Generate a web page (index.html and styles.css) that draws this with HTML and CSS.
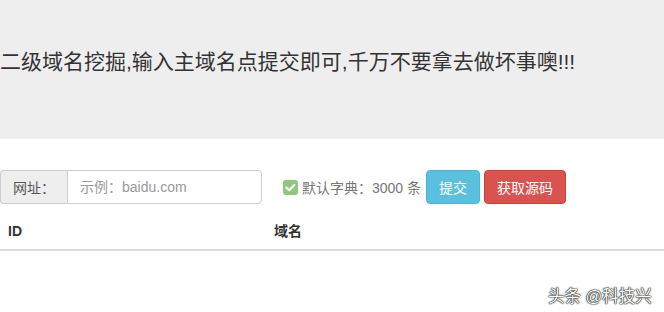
FILE: index.html
```html
<!DOCTYPE html>
<html>
<head>
<meta charset="utf-8">
<link rel="stylesheet" href="styles.css">
</head>
<body>
<div class="banner">
  <h1 class="title">二级域名挖掘,输入主域名点提交即可,千万不要拿去做坏事噢!!!</h1>
</div>
<div class="form">
  <div class="group">
    <span class="addon">网址：</span>
    <input class="field" type="text" placeholder="示例：baidu.com">
  </div>
  <label class="dict">
    <span class="check"><svg width="15" height="15" viewBox="0 0 15 15"><rect x="0" y="0" width="15" height="15" rx="3" fill="#8cc97b"/><path d="M3.5 7.6 L6.3 10.2 L11.5 4.8" fill="none" stroke="#fff" stroke-width="2.2" stroke-linecap="round" stroke-linejoin="round"/></svg></span>
    <span class="dict-text">默认字典：3000 条</span>
  </label>
  <button class="btn btn-info">提交</button>
  <button class="btn btn-danger">获取源码</button>
</div>
<table class="table">
  <thead>
    <tr><th class="col-id">ID</th><th>域名</th></tr>
  </thead>
</table>
<div class="mark">头条 @科技兴</div>
</body>
</html>
```
FILE: styles.css
```css
html, body {
  margin: 0;
  padding: 0;
}
body {
  width: 664px;
  height: 312px;
  overflow: hidden;
  font-family: "Liberation Sans", "Noto Sans CJK SC", sans-serif;
  font-size: 14px;
  color: #333;
  background: #fff;
  position: relative;
}
.banner {
  background: #eeeeee;
  height: 139px;
  padding-top: 47px;
  box-sizing: border-box;
}
.title {
  margin: 0;
  font-family: "Liberation Sans", "Noto Sans CJK SC", sans-serif;
  font-weight: normal;
  font-size: 21px;
  line-height: 30px;
  color: #333;
  white-space: nowrap;
}
.form {
  display: flex;
  align-items: center;
  margin-top: 31px;
  height: 34px;
}
.group {
  display: flex;
  width: 262px;
  height: 34px;
  box-sizing: border-box;
}
.addon {
  width: 67px;
  box-sizing: border-box;
  background: #eee;
  border: 1px solid #ccc;
  border-right: none;
  border-radius: 4px 0 0 4px;
  color: #555;
  display: flex;
  align-items: center;
  justify-content: center;
  font-size: 14px;
}
.field {
  flex: 1;
  min-width: 0;
  box-sizing: border-box;
  border: 1px solid #ccc;
  border-radius: 0 4px 4px 0;
  padding: 6px 12px;
  font-family: "Liberation Sans", "Noto Sans CJK SC", sans-serif;
  font-size: 14px;
  color: #555;
  outline: none;
  margin: 0;
}
.field::placeholder {
  color: #999;
}
.dict {
  display: flex;
  align-items: center;
  margin-left: 21px;
  color: #777;
  font-size: 14px;
}
.check {
  display: flex;
  width: 15px;
  height: 15px;
  margin-right: 4px;
  margin-top: 1px;
}
.btn {
  height: 34px;
  box-sizing: border-box;
  border: 1px solid transparent;
  border-radius: 4px;
  padding: 6px 12px;
  font-family: "Liberation Sans", "Noto Sans CJK SC", sans-serif;
  font-size: 14px;
  color: #fff;
  margin: 0;
}
.btn-info {
  background: #5bc0de;
  border-color: #46b8da;
  margin-left: 5px;
  width: 54px;
}
.btn-danger {
  background: #d9534f;
  border-color: #d43f3a;
  margin-left: 4px;
  width: 82px;
}
.table {
  width: 100%;
  border-collapse: collapse;
  margin-top: 9px;
}
.table th {
  text-align: left;
  padding: 8px;
  line-height: 20px;
  font-weight: bold;
  font-size: 14px;
  color: #333;
  border-bottom: 2px solid #ddd;
}
.col-id {
  width: 250px;
}
.mark {
  position: absolute;
  left: 548px;
  top: 283px;
  font-size: 16.5px;
  color: #fff;
  text-shadow: 0 0 2px #222, 0 0 1px #000, 0 0 1px #000;
  white-space: nowrap;
}
```
